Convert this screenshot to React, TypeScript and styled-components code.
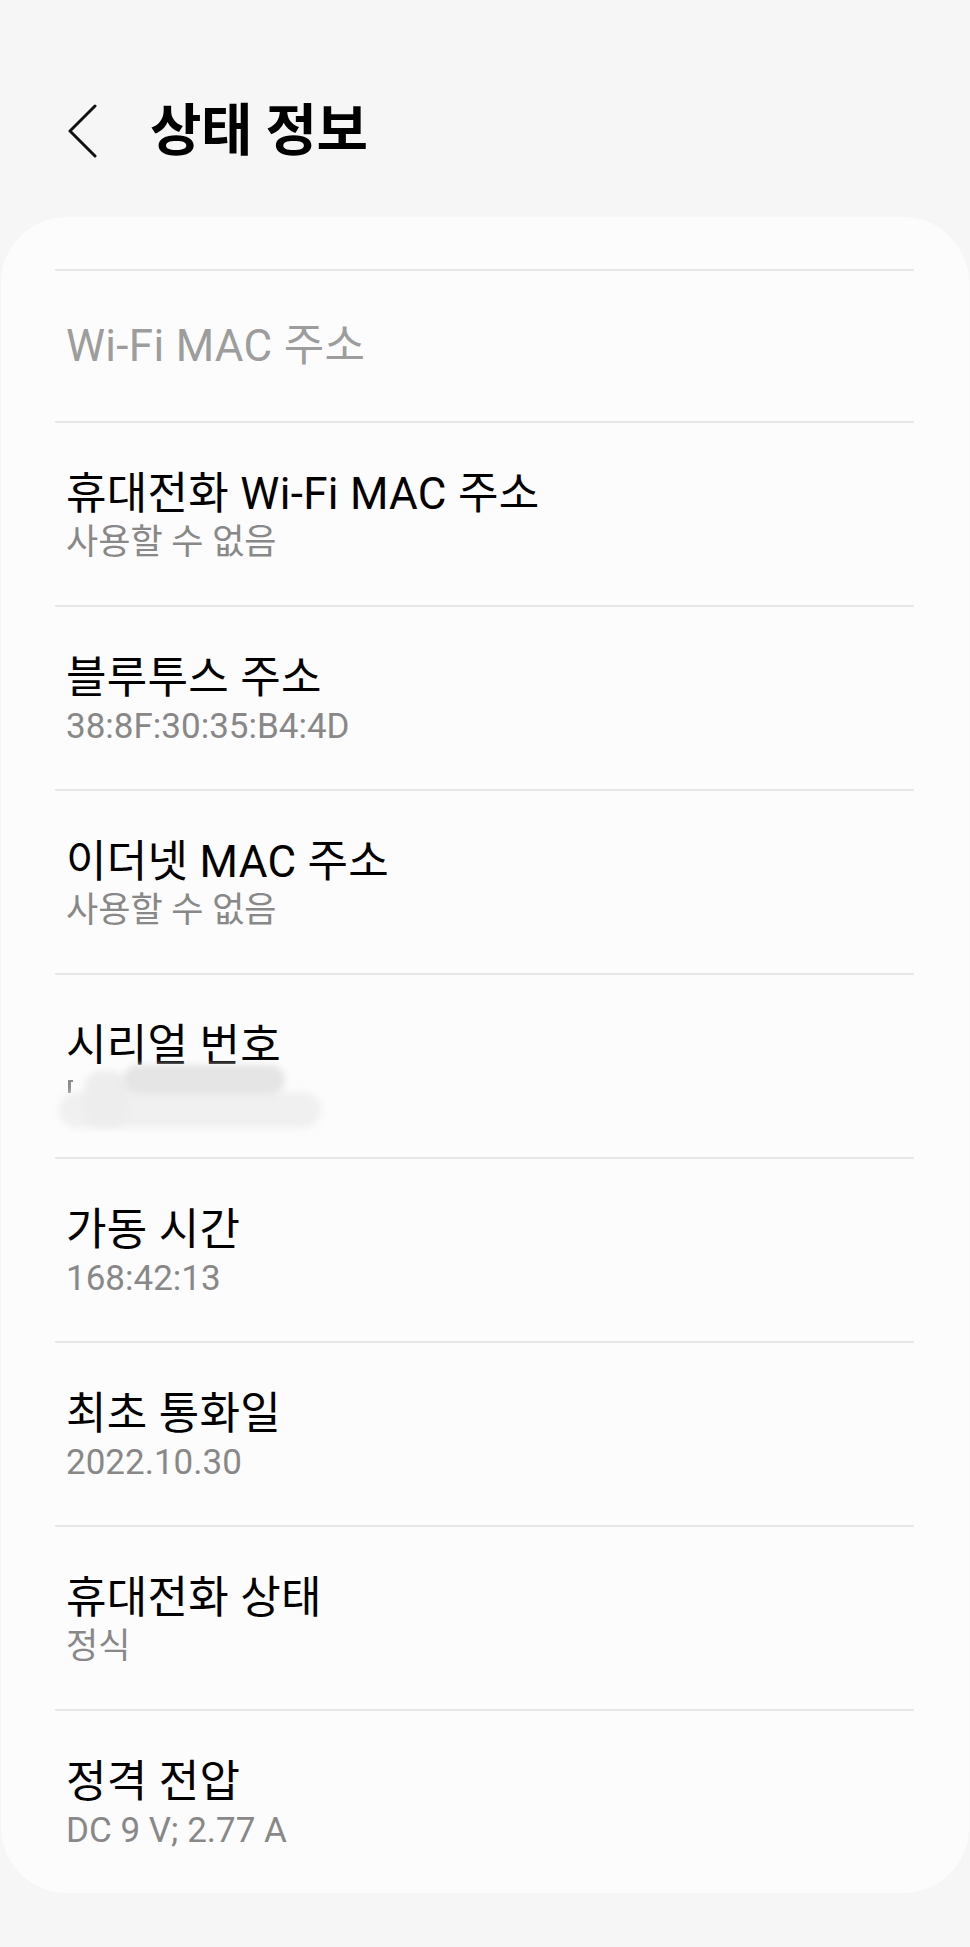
import React from 'react';
import styled, { createGlobalStyle } from 'styled-components';

interface Item {
  title: string;
  value?: string;
  disabled?: boolean;
  redacted?: boolean;
}

const items: Item[] = [
  { title: 'Wi-Fi MAC 주소', disabled: true },
  { title: '휴대전화 Wi-Fi MAC 주소', value: '사용할 수 없음' },
  { title: '블루투스 주소', value: '38:8F:30:35:B4:4D' },
  { title: '이더넷 MAC 주소', value: '사용할 수 없음' },
  { title: '시리얼 번호', redacted: true },
  { title: '가동 시간', value: '168:42:13' },
  { title: '최초 통화일', value: '2022.10.30' },
  { title: '휴대전화 상태', value: '정식' },
  { title: '정격 전압', value: 'DC 9 V; 2.77 A' },
];

export default function App() {
  return (
    <>
      <GlobalStyle />
      <Page>
        <Header>
          <BackButton aria-label="뒤로">
            <svg width="32" height="54" viewBox="0 0 32 54" fill="none">
              <path d="M29 2 L4 27 L29 52" stroke="#111" strokeWidth="3" strokeLinecap="round" strokeLinejoin="round" />
            </svg>
          </BackButton>
          <Title>상태 정보</Title>
        </Header>
        <Card>
          {items.map(item => (
            <Row key={item.title} single={!item.value && !item.redacted}>
              <RowTitle disabled={item.disabled}>{item.title}</RowTitle>
              {item.value && <RowValue>{item.value}</RowValue>}
              {item.redacted && (
                <Redacted>
                  <Mark />
                  <Smudge left={-7} top={19} width={262} height={36} shade="#f0f0f0" />
                  <Smudge left={18} top={-2} width={44} height={56} shade="#ededed" />
                  <Smudge left={57} top={-8} width={162} height={30} shade="#e5e5e5" />
                </Redacted>
              )}
            </Row>
          ))}
        </Card>
      </Page>
    </>
  );
}

const GlobalStyle = createGlobalStyle`
  html, body {
    margin: 0;
    padding: 0;
    background: #f6f6f6;
  }
  body {
    font-family: Roboto, "Noto Sans CJK KR", sans-serif;
  }
`;

const Page = styled.div`
  background: #f6f6f6;
  min-height: 1947px;
  padding-bottom: 54px;
  box-sizing: border-box;
`;

const Header = styled.header`
  align-items: center;
  box-sizing: border-box;
  display: flex;
  height: 217px;
  padding: 96px 0 51px 66px;
`;

const BackButton = styled.button`
  background: none;
  border: 0;
  display: flex;
  margin-right: 52px;
  padding: 0;
`;

const Title = styled.h1`
  color: #000;
  font-size: 56px;
  font-weight: 700;
  letter-spacing: -0.5px;
  line-height: 70px;
  margin: 0;
`;

const Card = styled.section`
  background: #fcfcfc;
  border-radius: 66px;
  margin: 0 1px;
  padding: 52px 55px 0 54px;
`;

const Row = styled.div<{ single?: boolean }>`
  border-top: 2px solid #e8e8e8;
  box-sizing: border-box;
  display: flex;
  flex-direction: column;
  height: ${p => (p.single ? '152px' : '184px')};
  padding: ${p => (p.single ? '49px 0 0 11px' : '45px 0 0 11px')};
`;

const RowTitle = styled.div<{ disabled?: boolean }>`
  color: ${p => (p.disabled ? '#9d9d9d' : '#000')};
  font-size: 44px;
  letter-spacing: 0.3px;
  line-height: 52px;
`;

const RowValue = styled.div`
  color: #888;
  font-size: 35px;
  line-height: 44px;
  margin-top: 1px;
`;

const Redacted = styled.div`
  height: 44px;
  margin-top: 1px;
  position: relative;
`;

const Mark = styled.span`
  border-left: 3px solid #8d8d8d;
  border-top: 2px solid #8d8d8d;
  height: 11px;
  left: 2px;
  position: absolute;
  top: 7px;
  width: 2px;
`;

const Smudge = styled.span<{ left: number; top: number; width: number; height: number; shade: string }>`
  background: ${p => p.shade};
  border-radius: 18px;
  filter: blur(3px);
  height: ${p => p.height}px;
  left: ${p => p.left}px;
  position: absolute;
  top: ${p => p.top}px;
  width: ${p => p.width}px;
`;
